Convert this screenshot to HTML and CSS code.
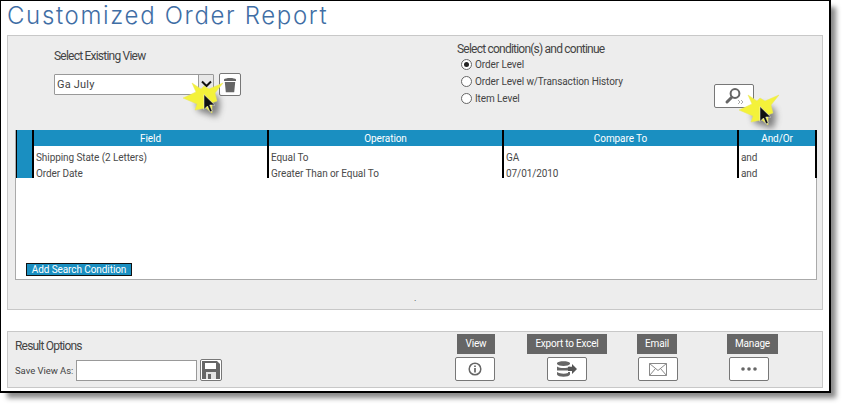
FILE: index.html
```html
<!DOCTYPE html>
<html lang="en">
<head>
<meta charset="utf-8">
<title>Customized Order Report</title>
<link rel="stylesheet" href="styles.css">
</head>
<body>
<div class="frame">
  <h1 class="title">Customized Order Report</h1>
  <section class="panel criteria">
    <div class="top">
      <div class="view-col">
        <div class="heading">Select Existing View</div>
        <div class="view-row">
          <div class="select">
            <span class="select-text">Ga July</span>
            <span class="select-arrow"><svg width="13" height="9" viewBox="0 0 13 9"><path d="M2 1.500l4.500 4.500 4.500-4.500" fill="none" stroke="#111" stroke-width="2"/></svg></span>
          </div>
          <button class="btn trash" type="button"><svg width="12" height="16" viewBox="0 0 12 16"><path d="M0 2.500C1 .5 11 .5 12 2.500V4H0z M.8 5h10.400l-1 10.200H1.800z" fill="#666"/></svg></button>
        </div>
      </div>
      <div class="cond-col">
        <div class="heading">Select condition(s) and continue</div>
        <label class="radio"><span class="dot on"></span>Order Level</label>
        <label class="radio"><span class="dot"></span>Order Level w/Transaction History</label>
        <label class="radio"><span class="dot"></span>Item Level</label>
      </div>
      <button class="btn search" type="button"><svg width="22" height="18" viewBox="0 0 22 18"><circle cx="12" cy="6.500" r="4.400" fill="#fff" stroke="#666" stroke-width="2"/><path d="M8.500 10.500L4 15" stroke="#666" stroke-width="3" stroke-linecap="round"/><path d="M15 13l2 2-2 2M18 13l2 2-2 2" fill="none" stroke="#aaa"/></svg></button>
    </div>
    <div class="table-box">
      <div class="grid head">
        <div class="cell"></div><div class="cell">Field</div><div class="cell">Operation</div><div class="cell">Compare To</div><div class="cell">And/Or</div>
      </div>
      <div class="grid row">
        <div class="cell stub"></div><div class="cell">Shipping State (2 Letters)</div><div class="cell">Equal To</div><div class="cell">GA</div><div class="cell">and</div>
      </div>
      <div class="grid row">
        <div class="cell stub"></div><div class="cell">Order Date</div><div class="cell">Greater Than or Equal To</div><div class="cell">07/01/2010</div><div class="cell">and</div>
      </div>
      <button class="add" type="button">Add Search Condition</button>
    </div>
    <div class="mark">.</div>
  </section>
  <section class="panel results">
    <div class="save-col">
      <div class="heading tight">Result Options</div>
      <div class="save-row">
        <span class="save-label">Save View As:</span>
        <span class="save-input"></span>
        <button class="btn save" type="button"><svg width="18" height="18" viewBox="0 0 18 18"><path d="M0 0h15l3 3v15H0z" fill="#666"/><path d="M3 2h11v6H3z" fill="#fff"/><path d="M4 11h10v7H4z" fill="#e4e4e4"/><path d="M6 13h3v5H6z" fill="#666"/></svg></button>
      </div>
    </div>
    <div class="action a-view">
      <span class="tag">View</span>
      <button class="btn act" type="button"><svg width="14" height="14" viewBox="0 0 14 14"><circle cx="7" cy="7" r="5.800" fill="none" stroke="#666" stroke-width="1.500"/><path d="M7 6v4.500M7 3.400v1.600" stroke="#666" stroke-width="1.700"/></svg></button>
    </div>
    <div class="action a-export">
      <span class="tag">Export to Excel</span>
      <button class="btn act" type="button"><svg width="20" height="16" viewBox="0 0 20 16"><path d="M0 2C1-.5 12-.5 13 2v1C12 5.500 1 5.500 0 3z M0 5.500C3 7.500 10 7.500 13 5.500V6.500L11 7.500V9.500H0z M0 11C3 13 8 13 11 12V11H13V13.500C12 16.500 1 16.500 0 13.500z" fill="#666"/><path d="M11 5.800h4V3l5 5-5 5v-3h-4z" fill="#555"/></svg></button>
    </div>
    <div class="action a-email">
      <span class="tag">Email</span>
      <button class="btn act" type="button"><svg width="18" height="13" viewBox="0 0 18 13"><path d="M.5.500h17v12H.500z M.5.500L9 7.500l8.500-7 M.5 12.500L6.500 5.500M17.500 12.500l-6-7" fill="#fff" stroke="#888"/></svg></button>
    </div>
    <div class="action a-manage">
      <span class="tag">Manage</span>
      <button class="btn act" type="button"><svg width="16" height="4" viewBox="0 0 16 4"><circle cx="2" cy="2" r="1.800" fill="#666"/><circle cx="8" cy="2" r="1.800" fill="#666"/><circle cx="14" cy="2" r="1.800" fill="#666"/></svg></button>
    </div>
  </section>
  <svg class="burst burst-a" width="44" height="46" viewBox="0 0 44 46"><use href="#star"/></svg>
  <svg class="burst burst-b" width="44" height="46" viewBox="0 0 44 46"><use href="#star"/></svg>
  <svg class="defs" width="0" height="0">
    <defs>
      <g id="star">
        <path class="star-shadow" d="M11 16L22 9 34 14 35 24 32 34 22 31 13 28z"/>
        <path d="M1 19L14 13 10 4 19 10 22 7 27 10 41 4 33 14 35 22 30 24 30 34 24 29 13 31 15 25z" fill="#f4f23a" stroke="#e8e65c" stroke-width=".5"/>
        <path d="M22 15.500v15l3.500-3.500 2.500 6 2.200-1-2.500-6h5z" fill="#111" stroke="#fff" stroke-width=".5"/>
      </g>
    </defs>
  </svg>
</div>
</body>
</html>
```

FILE: styles.css
```css
* { box-sizing: border-box; }
html, body { margin: 0; padding: 0; background: #fff; }
body { width: 846px; height: 408px; overflow: hidden; font-family: Roboto, "Liberation Sans", sans-serif; color: #444; }
button { padding: 0; font: inherit; }
.frame {
  position: relative;
  width: 831px;
  height: 393px;
  background: #fff;
  border: 1px solid #000;
  border-width: 1px 2px 2px 1px;
  box-shadow: 6px 6px 5px -1px #8a8a8a;
  padding: 0 6px 0 6px;
}
.title {
  margin: 0;
  height: 34px;
  font: 300 24px/29px Inter, "Open Sans", sans-serif;
  letter-spacing: 1.65px;
  color: #3f6ea5;
}
.panel { background: #ededed; border: 1px solid #c8c8c8; width: 816px; }
.criteria { height: 275px; padding: 0 5px 0 7px; position: relative; }
.results { height: 57px; margin-top: 21px; display: flex; padding-top: 2px; }
.top { height: 94px; display: flex; position: relative; }
.heading { font-size: 12px; letter-spacing: -.78px; line-height: 14px; color: #444; }
.heading.tight { letter-spacing: -.8px; }
.view-col { width: 443px; padding: 13px 0 0 39px; flex: none; }
.view-row { display: flex; margin-top: 11px; }
.select { width: 160px; height: 21px; display: flex; background: #fff; border: 1px solid #999; border-radius: 1px; }
.select-text { flex: 1; font-size: 11px; line-height: 19px; padding-left: 2px; letter-spacing: .2px; }
.select-arrow { width: 15px; background: #e8e8e8; border-left: 1px solid #999; display: flex; align-items: center; justify-content: center; }
.btn { display: flex; align-items: center; justify-content: center; background: #fff; border: 1px solid #777; border-radius: 2px; }
.trash { width: 22px; height: 23px; margin: -1px 0 0 5px; }
.cond-col { padding-top: 6px; flex: none; width: 257px; margin-left: -1px; }
.radio { display: flex; align-items: center; height: 17px; font-size: 10px; letter-spacing: -.1px; color: #444; margin-left: 4px; }
.dot { width: 11px; height: 11px; border: 1px solid #666; border-radius: 50%; background: #fff; margin-right: 3px; flex: none; display: flex; align-items: center; justify-content: center; }
.dot.on::after { content: ""; width: 5px; height: 5px; border-radius: 50%; background: #222; }
.search { width: 40px; height: 24px; margin: 48px 0 0 0; }
.table-box { height: 150px; width: 802px; background: #fff; border: 1px solid #aaa; border-width: 0 1px 1px 1px; position: relative; }
.grid { display: grid; grid-template-columns: 16px 235px 235px 235px 80px; width: 801px; }
.cell { border-left: 2px solid #000; height: 16px; font-size: 10px; line-height: 16px; letter-spacing: -.08px; padding: 4px 0 0 2px; color: #4a4a4a; white-space: nowrap; }
.cell:first-child { border-left-width: 1px; padding: 0; }
.cell:last-child { border-right: 2px solid #000; }
.head { background: #1a8fc1; }
.head .cell { color: #fff; text-align: center; line-height: 17px; padding: 0; }
.stub { background: #1a8fc1; }
.add { position: absolute; left: 10px; top: 133px; width: 106px; height: 13px; border: 1px solid #111; background: #1a8fc1; color: #fff; font-size: 10px; line-height: 10px; letter-spacing: -.08px; }
.mark { position: absolute; left: 406px; top: 257px; font-size: 9px; line-height: 10px; color: #333; }
.save-col { width: 447px; flex: none; padding: 5px 0 0 7px; }
.save-row { display: flex; align-items: center; margin-top: 6px; }
.save-label { font-size: 9.500px; width: 61px; letter-spacing: -.05px; flex: none; white-space: nowrap; }
.save-input { width: 121px; height: 21px; background: #fff; border: 1px solid #999; }
.save { width: 22px; height: 22px; margin-left: 3px; }
.action { display: flex; flex-direction: column; align-items: center; gap: 3px; flex: none; }
.tag { height: 20px; background: #666; color: #fff; font-size: 10px; line-height: 20px; text-align: center; letter-spacing: -.2px; }
.act { width: 40px; height: 24px; }
.a-view { width: 40px; }
.a-view .tag { width: 38px; margin-left: 2px; }
.a-export { width: 80px; margin-left: 32px; }
.a-export .tag { width: 80px; }
.a-email { width: 40px; margin-left: 31px; }
.a-email .tag { width: 40px; margin-left: -2px; }
.a-manage { width: 51px; margin-left: 49px; }
.a-manage .tag { width: 51px; }
.a-manage .act { align-self: flex-start; margin-left: 2px; }
.burst { position: absolute; overflow: visible; }
.burst-a { left: 181px; top: 78px; }
.burst-b { left: 737px; top: 90px; }
.defs { position: absolute; }
.star-shadow { fill: #555; opacity: .7; filter: blur(3px); transform: translate(3px, 4px); }
```
